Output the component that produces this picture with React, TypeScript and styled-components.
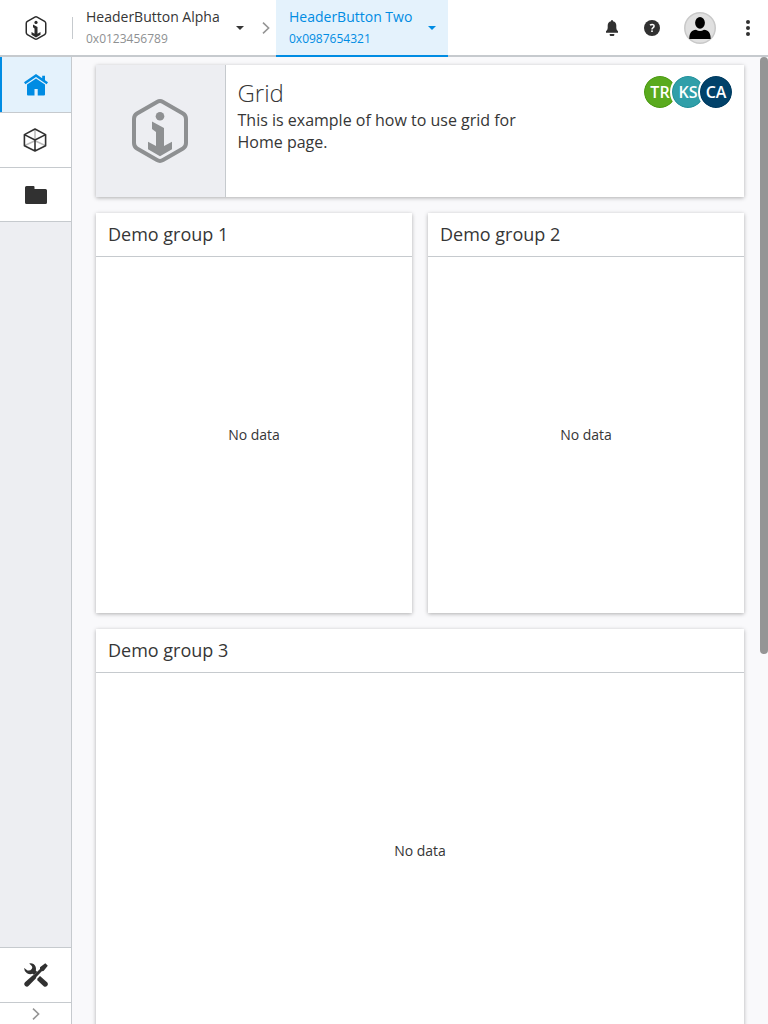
import React from "react";
import styled, { createGlobalStyle, css } from "styled-components";

const GlobalStyle = createGlobalStyle`
  *, *::before, *::after { box-sizing: border-box; }
  body {
    margin: 0;
    overflow: hidden;
    color: #363636;
    background: #f9f9fb;
    font-family: "Open Sans", "Noto Sans", sans-serif;
  }
`;

const Page = styled.div`
  display: flex;
  flex-direction: column;
  height: 100vh;
`;

const Header = styled.header`
  display: flex;
  flex: none;
  height: 57px;
  background: #fff;
  box-shadow: inset 0 -2px #c6cace;
`;

const LogoCell = styled.div`
  display: flex;
  align-items: center;
  justify-content: center;
  width: 72px;
  height: 56px;
`;

const Separator = styled.div`
  width: 1px;
  height: 22px;
  margin-top: 17px;
  background: #c6cace;
`;

const HeaderButton = styled.button<{ $active?: boolean }>`
  display: flex;
  align-items: center;
  justify-content: space-between;
  width: ${(p) => (p.$active ? 172 : 183)}px;
  height: 57px;
  padding: 0 12px 0 13px;
  border: 0;
  text-align: left;
  font-family: inherit;
  color: ${(p) => (p.$active ? "#008ce3" : "#363636")};
  background: ${(p) => (p.$active ? "#e4f2fc" : "transparent")};
  box-shadow: ${(p) => (p.$active ? "inset 0 -2px #008ce3" : "none")};
`;

const ButtonText = styled.span`
  display: flex;
  flex-direction: column;
  height: 57px;
  padding-top: 6px;
`;

const Primary = styled.span`
  font-size: 14px;
  line-height: 22px;
  white-space: nowrap;
`;

const Secondary = styled.span<{ $active?: boolean }>`
  font-size: 12px;
  line-height: 21px;
  color: ${(p) => (p.$active ? "#008ce3" : "#8e9092")};
`;

const Caret = styled.span`
  margin-bottom: 2px;
  border: 4px solid transparent;
  border-top-color: currentColor;
  border-bottom: 0;
`;

const ButtonGap = styled.div`
  display: flex;
  align-items: center;
  justify-content: center;
  width: 20px;
  height: 56px;
`;

const HeaderActions = styled.div`
  display: flex;
  align-items: center;
  height: 56px;
  margin-left: auto;
`;

const Action = styled.div<{ $w: number }>`
  display: flex;
  align-items: center;
  justify-content: center;
  width: ${(p) => p.$w}px;
`;

const Body = styled.div`
  display: flex;
  flex: 1;
  min-height: 0;
`;

const Sidebar = styled.nav`
  display: flex;
  flex: none;
  flex-direction: column;
  justify-content: space-between;
  width: 72px;
  background: #edeef2;
  border-right: 1px solid #c6cace;
`;

const NavItem = styled.div<{ $h: number; $active?: boolean; $top?: boolean }>`
  display: flex;
  align-items: center;
  justify-content: center;
  height: ${(p) => p.$h}px;
  background: ${(p) => (p.$active ? "#e4f2fc" : "#fff")};
  ${(p) =>
    p.$top
      ? css`border-top: 1px solid #c6cace;`
      : css`border-bottom: 1px solid #c6cace;`}
  ${(p) => p.$active && css`box-shadow: inset 2px 0 #008ce3;`}
`;

const Main = styled.main`
  display: grid;
  flex: 1;
  grid-template-columns: 1fr 1fr;
  grid-template-rows: 132px 400px 400px;
  gap: 16px;
  padding: 8px 16px 0 24px;
  overflow: hidden;
`;

const Card = styled.section<{ $wide?: boolean }>`
  display: flex;
  flex-direction: column;
  background: #fff;
  box-shadow: 0 1px 4px rgba(0, 0, 0, 0.3);
  ${(p) => p.$wide && css`grid-column: 1 / -1;`}
`;

const HeroCard = styled(Card)`
  flex-direction: row;
`;

const HeroImage = styled.div`
  display: flex;
  align-items: center;
  justify-content: center;
  width: 130px;
  padding-right: 1px;
  background: #edeef2;
  border-right: 1px solid #c6cace;
`;

const HeroText = styled.div`
  width: 310px;
  padding: 12px 0 0 11.5px;
`;

const HeroTitle = styled.h1`
  margin: 0;
  font-size: 24px;
  font-weight: 300;
  line-height: 32px;
`;

const HeroDescription = styled.p`
  margin: 0;
  font-size: 16px;
  line-height: 22px;
`;

const Avatars = styled.div`
  display: flex;
  margin: 9px 10px 0 auto;
`;

const Avatar = styled.div<{ $bg: string; $edge: string }>`
  display: flex;
  align-items: center;
  justify-content: center;
  width: 36px;
  height: 36px;
  border: 2px solid #fff;
  border-radius: 50%;
  color: #fff;
  font-size: 16px;
  font-weight: 600;
  background: ${(p) => p.$bg};
  background-clip: padding-box;
  box-shadow: inset 0 0 0 1px ${(p) => p.$edge};
  & + & { margin-left: -8px; }
`;

const CardHeader = styled.h2`
  flex: none;
  height: 44px;
  margin: 0;
  padding-left: 12px;
  border-bottom: 1px solid #c6cace;
  font-size: 18px;
  font-weight: 400;
  line-height: 43px;
`;

const Empty = styled.div`
  display: flex;
  flex: 1;
  align-items: center;
  justify-content: center;
  padding-bottom: 2px;
  font-size: 14px;
`;

const ScrollTrack = styled.div`
  flex: none;
  width: 8px;
`;

const ScrollThumb = styled.div`
  height: 597px;
  border-radius: 4px;
  background: #959595;
`;

const Logo = ({ width, height, color }: { width: number; height: number; color: string }) => (
  <svg width={width} height={height} viewBox="0 0 56 64" fill={color}>
    <path
      d="M25 2.9Q28 1.2 31 2.9L51 14.5Q54 16.3 54 20V44Q54 47.7 51 49.5L31 61.1Q28 62.8 25 61.1L5 49.5Q2 47.7 2 44V20Q2 16.3 5 14.5Z"
      fill="none"
      stroke={color}
      strokeWidth="4"
    />
    <circle cx="28" cy="17.2" r="4.3" />
    <path d="M20 22.5L32 29V47L40 42.7V50.2L28 57.3L16 50.2V42.7L24 47V33L20 30Z" />
  </svg>
);

const Chevron = () => (
  <svg width="8" height="12" viewBox="0 0 8 12" fill="none" stroke="#959595" strokeWidth="1.6">
    <path d="M1 .7L6.6 6L1 11.3" />
  </svg>
);

const BellIcon = () => (
  <svg width="14" height="16" viewBox="0 0 14 16" fill="#313131">
    <path d="M6 1.2Q6 0 7 0T8 1.2Q11.3 2 11.3 5.5V8Q11.3 10 13 11.3V12.7H1V11.3Q2.7 10 2.7 8V5.5Q2.7 2 6 1.2ZM4.7 14H9.3V15Q9.3 16 8.3 16H5.7Q4.7 16 4.7 15Z" />
  </svg>
);

const HelpIcon = () => (
  <svg width="16" height="16" viewBox="0 0 16 16">
    <circle cx="8" cy="8" r="8" fill="#313131" />
    <path d="M6 5.2Q7.1 4.3 8.4 4.4C11 4.7 10.2 7 8.9 7.8Q8 8.4 8 9.4" fill="none" stroke="#fff" strokeWidth="1.5" />
    <rect x="7.2" y="10.4" width="1.6" height="1.6" fill="#fff" />
  </svg>
);

const UserIcon = () => (
  <svg width="32" height="32" viewBox="0 0 32 32">
    <circle cx="16" cy="16" r="15.25" fill="#e0e0e0" stroke="#c9c9c9" strokeWidth="1.5" />
    <ellipse cx="16" cy="10.8" rx="4.9" ry="5.9" />
    <path d="M5.3 27C5.3 21 7.5 18.3 12 17.8Q16 20.2 20 17.8C24.5 18.3 26.7 21 26.7 27Z" />
  </svg>
);

const MoreIcon = () => (
  <svg width="4" height="16" viewBox="0 0 4 16" fill="#313131">
    <circle cx="2" cy="2" r="2" />
    <circle cx="2" cy="8" r="2" />
    <circle cx="2" cy="14" r="2" />
  </svg>
);

const HomeIcon = () => (
  <svg width="24" height="22" viewBox="0 0 24 22" fill="#008ce3">
    <path d="M12 0L18.2 4.2V1.7H21V6.2L24 8.3L22.6 10.2L12 3L1.4 10.2L0 8.3Z" />
    <path d="M12 4.4L21 10.5V20.6Q21 21.5 20 21.5H13.7V15H10.5V21.5H4Q3 21.5 3 20.6V10.5Z" />
  </svg>
);

const CubeIcon = () => (
  <svg width="25" height="24" viewBox="0 0 25 24" fill="none" strokeLinejoin="round">
    <path d="M12 1.3V12M1.8 17.5L12 12.8L22.2 17.5" stroke="#bababa" strokeWidth="1.5" />
    <path d="M12 1L22.6 6.6V17.8L12 23L1.4 17.8V6.6ZM1.4 6.6L12 12L22.6 6.6M12 12V23" stroke="#313131" strokeWidth="1.6" />
  </svg>
);

const FolderIcon = () => (
  <svg width="22" height="18" viewBox="0 0 22 18" fill="#313131">
    <path d="M1.5 0H8.5Q9.5 0 9.5 1V3H20.5Q22 3 22 4.5V16.5Q22 18 20.5 18H1.5Q0 18 0 16.5V1.5Q0 0 1.5 0Z" />
  </svg>
);

const ToolsIcon = () => (
  <svg width="24" height="24" viewBox="0 0 24 24" fill="#313131">
    <path d="M23.8 2.7L21.3.3L16 4.3V6L9.9 12L8.6 12.5L1 19.3Q-.7 21.3 1.2 23T4.7 22.8L12 15.2L12.3 14L17.8 8.2L19.5 8Z" />
    <path d="M5.2.5Q9.5-.4 11.5 3.5Q12.3 5.5 11.8 7.5L13.2 9L10 12L8.5 10.8Q5.7 11.7 3 10.3Q0 8.5.2 5L3.5 7.5Q6.4 8 7.7 6T7.3 2.5Z" />
    <path d="M13.3 15.7L16 13L23.3 19.6Q24.5 21.2 23.2 22.8T20 23.6L13.3 17.2Z" />
  </svg>
);

const navItems = [
  { id: "home", height: 56, icon: <HomeIcon />, active: true },
  { id: "objects", height: 55, icon: <CubeIcon /> },
  { id: "folders", height: 54, icon: <FolderIcon /> },
];

const avatars = [
  { initials: "TR", bg: "#5aaa1e", edge: "#4c9a14" },
  { initials: "KS", bg: "#309fa9", edge: "#24909b" },
  { initials: "CA", bg: "#01426a", edge: "#003b60" },
];

const groups = [
  { title: "Demo group 1" },
  { title: "Demo group 2" },
  { title: "Demo group 3", wide: true },
];

export default function App() {
  return (
    <Page>
      <GlobalStyle />
      <Header>
        <LogoCell>
          <Logo width={22} height={24} color="#2b2b2b" />
        </LogoCell>
        <Separator />
        <HeaderButton>
          <ButtonText>
            <Primary>HeaderButton Alpha</Primary>
            <Secondary>0x0123456789</Secondary>
          </ButtonText>
          <Caret />
        </HeaderButton>
        <ButtonGap>
          <Chevron />
        </ButtonGap>
        <HeaderButton $active>
          <ButtonText>
            <Primary>HeaderButton Two</Primary>
            <Secondary $active>0x0987654321</Secondary>
          </ButtonText>
          <Caret />
        </HeaderButton>
        <HeaderActions>
          <Action $w={40}><BellIcon /></Action>
          <Action $w={40}><HelpIcon /></Action>
          <Action $w={56}><UserIcon /></Action>
          <Action $w={40}><MoreIcon /></Action>
        </HeaderActions>
      </Header>
      <Body>
        <Sidebar>
          <div>
            {navItems.map((n) => (
              <NavItem key={n.id} $h={n.height} $active={n.active}>{n.icon}</NavItem>
            ))}
          </div>
          <div>
            <NavItem $h={55} $top><ToolsIcon /></NavItem>
            <NavItem $h={22} $top><Chevron /></NavItem>
          </div>
        </Sidebar>
        <Main>
          <HeroCard $wide>
            <HeroImage>
              <Logo width={56} height={64} color="#8e9092" />
            </HeroImage>
            <HeroText>
              <HeroTitle>Grid</HeroTitle>
              <HeroDescription>This is example of how to use grid for Home page.</HeroDescription>
            </HeroText>
            <Avatars>
              {avatars.map((a) => (
                <Avatar key={a.initials} $bg={a.bg} $edge={a.edge}>{a.initials}</Avatar>
              ))}
            </Avatars>
          </HeroCard>
          {groups.map((g) => (
            <Card key={g.title} $wide={g.wide}>
              <CardHeader>{g.title}</CardHeader>
              <Empty>No data</Empty>
            </Card>
          ))}
        </Main>
        <ScrollTrack>
          <ScrollThumb />
        </ScrollTrack>
      </Body>
    </Page>
  );
}
